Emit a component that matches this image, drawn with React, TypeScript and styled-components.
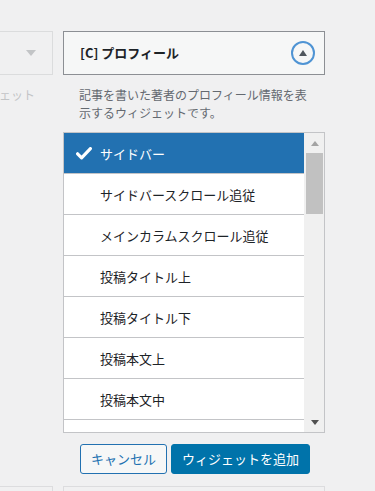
import React from "react";
import styled, { createGlobalStyle } from "styled-components";

const Global = createGlobalStyle`
  html, body { margin: 0; padding: 0; }
  body {
    background: #f0f0f1;
    font-family: "Noto Sans CJK JP", "Noto Sans", sans-serif;
    color: #1d2327;
    overflow: hidden;
  }
`;

const Page = styled.div`
  width: 375px;
  height: 491px;
  overflow: hidden;
  position: relative;
`;

const Columns = styled.div`
  display: flex;
  gap: 10px;
  margin-left: -209px;
  padding-top: 31px;
`;

const Column = styled.div<{ $faded?: boolean }>`
  width: 262px;
  flex: none;
  display: flex;
  flex-direction: column;
  opacity: ${(p) => (p.$faded ? 0.45 : 1)};
`;

const Header = styled.div<{ $active?: boolean }>`
  height: 44px;
  box-sizing: border-box;
  border: 1px solid ${(p) => (p.$active ? "#8c8f94" : "#c3c4c7")};
  background: ${(p) => (p.$active ? "#f6f7f7" : "#f0f0f1")};
  display: flex;
  align-items: center;
  justify-content: space-between;
  padding: 0 8px 0 16px;
`;

const Title = styled.h3`
  margin: 0;
  font-size: 13px;
  font-weight: 700;
  line-height: 1.2;
  color: #1d2327;
`;

const ToggleCircle = styled.span<{ $plain?: boolean }>`
  width: 24px;
  height: 24px;
  box-sizing: border-box;
  border: ${(p) => (p.$plain ? "none" : "2px solid #4f94d4")};
  border-radius: 50%;
  display: flex;
  align-items: center;
  justify-content: center;
  margin-right: 1px;
`;

const Triangle = styled.span<{ $down?: boolean; $color: string; $w?: number; $h?: number }>`
  width: 0;
  height: 0;
  border-left: ${(p) => (p.$w ?? 8) / 2}px solid transparent;
  border-right: ${(p) => (p.$w ?? 8) / 2}px solid transparent;
  ${(p) =>
    p.$down
      ? `border-top: ${p.$h ?? 5}px solid ${p.$color};`
      : `border-bottom: ${p.$h ?? 5}px solid ${p.$color};`}
`;

const Description = styled.p<{ $faded?: boolean }>`
  margin: 0;
  padding: 11px 16px 10px 16px;
  width: 232px;
  font-size: 12px;
  line-height: 18px;
  color: ${(p) => (p.$faded ? "#8c8f94" : "#646970")};
`;

const ListBox = styled.div`
  height: 301px;
  box-sizing: border-box;
  border: 1px solid #c3c4c7;
  background: #fff;
  display: flex;
  overflow: hidden;
`;

const Items = styled.ul`
  list-style: none;
  margin: 0;
  padding: 0;
  flex: 1;
  overflow: hidden;
`;

const Item = styled.li<{ $selected?: boolean }>`
  height: 40px;
  border-bottom: 1px solid #c3c4c7;
  display: flex;
  align-items: center;
  padding-left: 12px;
  font-size: 13px;
  color: ${(p) => (p.$selected ? "#fff" : "#1d2327")};
  background: ${(p) => (p.$selected ? "#2271b1" : "#fff")};
`;

const CheckSlot = styled.span`
  width: 24px;
  flex: none;
  display: flex;
  align-items: center;
`;

const Scrollbar = styled.div`
  width: 20px;
  flex: none;
  background: #f0f0f0;
  display: flex;
  flex-direction: column;
  align-items: stretch;
`;

const ScrollButton = styled.div`
  height: 20px;
  display: flex;
  align-items: center;
  justify-content: center;
  padding-left: 2px;
`;

const Thumb = styled.div`
  height: 61px;
  margin: 0 1px 0 2px;
  background: #c1c1c1;
`;

const Track = styled.div`
  flex: 1;
`;

const Actions = styled.div`
  display: flex;
  gap: 4px;
  padding: 11px 0 0 17px;
`;

const Button = styled.button<{ $primary?: boolean }>`
  height: 30px;
  box-sizing: border-box;
  border-radius: 3px;
  border: 1px solid ${(p) => (p.$primary ? "#0073aa" : "#2271b1")};
  background: ${(p) => (p.$primary ? "#0073aa" : "#f6f7f7")};
  color: ${(p) => (p.$primary ? "#fff" : "#2271b1")};
  font-family: "Noto Sans CJK JP", "Noto Sans", sans-serif;
  font-size: 13px;
  line-height: 20px;
  padding: 0 10px;
  cursor: pointer;
`;

const NextRow = styled.div`
  display: flex;
  gap: 10px;
  margin-left: -209px;
  margin-top: 12px;
`;

const NextBox = styled.div`
  width: 262px;
  height: 40px;
  box-sizing: border-box;
  border: 1px solid #dcdcde;
  background: #f0f0f1;
`;

const items = [
  "サイドバースクロール追従",
  "メインカラムスクロール追従",
  "投稿タイトル上",
  "投稿タイトル下",
  "投稿本文上",
  "投稿本文中",
  "投稿本文下",
];

const Check = () => (
  <svg width="16" height="13" viewBox="0 0 16 13" aria-hidden="true">
    <path d="M1.6 6.8 L5.6 10.8 L14.4 1.6" fill="none" stroke="#fff" strokeWidth="3.2" strokeLinecap="round" strokeLinejoin="round" />
  </svg>
);

export default function App() {
  return (
    <Page>
      <Global />
      <Columns>
        <Column $faded>
          <Header>
            <Title />
            <ToggleCircle $plain>
              <Triangle $down $color="#8c8f94" $w={10} $h={6} />
            </ToggleCircle>
          </Header>
          <Description $faded>広告を表示するための簡単なウィジェット</Description>
        </Column>
        <Column>
          <Header $active>
            <Title>[C] プロフィール</Title>
            <ToggleCircle>
              <Triangle $color="#50575e" $w={9} $h={6} />
            </ToggleCircle>
          </Header>
          <Description>記事を書いた著者のプロフィール情報を表示するウィジェットです。</Description>
          <ListBox>
            <Items>
              <Item $selected>
                <CheckSlot>
                  <Check />
                </CheckSlot>
                サイドバー
              </Item>
              {items.map((t) => (
                <Item key={t}>
                  <CheckSlot />
                  {t}
                </Item>
              ))}
            </Items>
            <Scrollbar>
              <ScrollButton>
                <Triangle $color="#a3a3a3" $w={9} $h={5} />
              </ScrollButton>
              <Thumb />
              <Track />
              <ScrollButton>
                <Triangle $down $color="#505050" $w={9} $h={5} />
              </ScrollButton>
            </Scrollbar>
          </ListBox>
          <Actions>
            <Button>キャンセル</Button>
            <Button $primary>ウィジェットを追加</Button>
          </Actions>
        </Column>
      </Columns>
      <NextRow>
        <NextBox />
        <NextBox />
      </NextRow>
    </Page>
  );
}
